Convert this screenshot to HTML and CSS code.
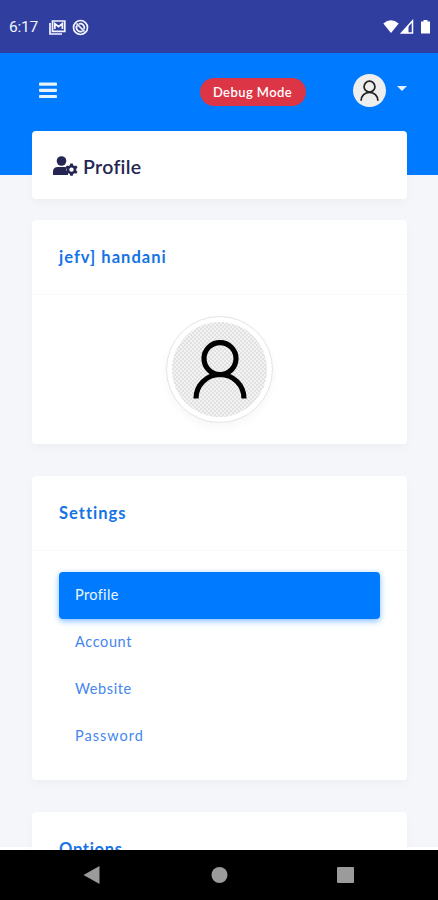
FILE: index.html
```html
<!DOCTYPE html>
<html lang="en">
<head>
<meta charset="utf-8">
<title>Profile</title>
<link rel="stylesheet" href="styles.css">
</head>
<body>
<div class="screen">
  <header class="status">
    <span class="time">6:17</span>
    <svg class="mail" width="17" height="15" viewBox="0 0 17 15"><path d="M1 3v11h12" fill="none" stroke="currentColor" stroke-width="1.7"/><path d="M3.5 1h12.300v10.300H3.500z" fill="none" stroke="currentColor" stroke-width="1.700"/><path d="M5.800 9V3.700l3.800 3 3.800-3V9" fill="none" stroke="currentColor" stroke-width="1.800"/></svg>
    <svg class="sync" width="17" height="17" viewBox="0 0 17 17" fill="none" stroke="currentColor"><circle cx="8.500" cy="8.500" r="7" stroke-width="1.700"/><path d="M5 6.500a4 4 0 0 0 5.500 5.500M6.800 5a4 4 0 0 1 5.200 5.200M4.500 4.500l8 8" stroke-width="1.700"/></svg>
    <svg class="signals" width="48" height="16" viewBox="0 0 48 16"><path d="M.3 4.500Q8-2 15.700 4.500L8 14z" fill="currentColor"/><path d="M29.500 2v12H18.500z" fill="none" stroke="currentColor" stroke-width="1.500"/><path d="M25.500 6v8h-7z" fill="currentColor"/><path d="M40.500 1h4v1.500H47V14.500h-9V2.500h2.500z" fill="currentColor"/></svg>
  </header>
  <main class="page">
    <nav class="topbar">
      <svg class="bars" width="18" height="17" viewBox="0 0 18 17" fill="currentColor"><rect y=".5" width="18" height="3.200" rx=".8"/><rect y="6.700" width="18" height="3.200" rx=".8"/><rect y="12.900" width="18" height="3.200" rx=".8"/></svg>
      <span class="badge"><span>Debug Mode</span></span>
      <span class="avatar"><svg width="19" height="21" viewBox="0 0 54 60"><circle cx="27" cy="19" r="15.500"/><path d="M3 59a24 24 0 0 1 48 0"/></svg></span>
      <i class="caret"></i>
    </nav>
    <section class="card title-card">
      <svg width="25" height="20" viewBox="0 0 25 20" fill="currentColor"><circle cx="8.500" cy="5" r="4.800"/><path d="M0 19v-3.500Q0 11 5 11h7q1 0 1.800.4-1 3.600 1.200 5.600v2z"/><path fill-rule="evenodd" d="M17.300 7.500h2.400l.5 1.800 1.300.7 1.700-.5 1.300 2.100-1.300 1.300v1.500l1.300 1.300-1.300 2.100-1.700-.5-1.300.7-.5 1.700h-2.400l-.5-1.700-1.300-.7-1.700.5-1.200-2.100 1.300-1.300v-1.500l-1.300-1.300 1.200-2.100 1.700.5 1.300-.7zM18.500 11.400a2.200 2.200 0 1 0 0 4.400 2.200 2.200 0 0 0 0-4.400z"/></svg>
      <h1>Profile</h1>
    </section>
    <section class="card user-card">
      <h2 class="name">jefv] handani</h2>
      <div class="photo-wrap"><div class="photo"><svg width="54" height="60" viewBox="0 0 54 60"><circle cx="27" cy="18.600" r="16"/><path d="M3 58.500a24 24 0 0 1 48 0"/></svg></div></div>
    </section>
    <section class="card settings-card">
      <h2 class="settings">Settings</h2>
      <ul class="menu">
        <li class="active m1">Profile</li>
        <li class="m2">Account</li>
        <li class="m3">Website</li>
        <li class="m4">Password</li>
      </ul>
    </section>
    <section class="card options-card"><h2 class="options">Options</h2></section>
  </main>
  <footer class="navbar">
    <svg width="438" height="50" viewBox="0 0 438 50" fill="#9b9b9b"><path d="M83.500 25 99.500 16v18z"/><circle cx="219.500" cy="25" r="8"/><rect x="337" y="17" width="17" height="16" rx="1"/></svg>
  </footer>
</div>
</body>
</html>
```
FILE: styles.css
```css
* { box-sizing: border-box; }
body { margin: 0; font-family: Lato, "Open Sans", sans-serif; }
.screen { width: 438px; height: 900px; display: flex; flex-direction: column; overflow: hidden; }
.status { flex: none; height: 53px; display: flex; align-items: center; padding: 1px 7px 0 9px; background: #303f9f; color: #f3f4ff; }
.time { width: 30px; font: 15.5px Roboto, sans-serif; letter-spacing: -.2px; white-space: nowrap; }
.mail { margin-left: 10px; }
.sync { margin-left: 6px; }
.signals { margin-left: auto; color: #fff; }
.page { flex: none; height: 797px; overflow: hidden; padding: 0 31px 0 32px; background: linear-gradient(#007bff 122px, #f4f6f9 122px, #f4f6f9 794px, #fff 794px); }
.topbar { height: 78px; display: flex; align-items: center; padding: 0 0 3px 6.500px; color: #e4f1ff; }
.bars { flex: none; }
.badge { width: 106px; height: 28px; margin-left: 143px; margin-top: 2px; border-radius: 14px; background: #dc3545; color: #fff; display: flex; align-items: center; justify-content: center; font-size: 13px; font-weight: 600; letter-spacing: .42px; white-space: nowrap; }
.avatar { width: 33px; height: 33px; margin-left: 47px; border-radius: 50%; background: #eee; display: flex; align-items: center; justify-content: center; }
.avatar svg { fill: none; stroke: #222; stroke-width: 5; }
.caret { margin-left: 11px; margin-top: -5px; border: 5px solid transparent; border-top-color: #e4f1ff; border-bottom: 0; }
.card { background: #fff; border-radius: 4px; box-shadow: 0 4px 8px rgba(0,0,0,.03); }
h1, h2 { margin: 0; white-space: nowrap; }
.title-card { height: 68px; display: flex; align-items: center; padding: 2px 21px 0; color: #252653; }
h1 { margin-left: 5px; font-size: 19.5px; font-weight: 600; letter-spacing: .3px; }
.user-card { height: 224px; margin-top: 21px; }
h2 { height: 75px; padding: 0 27px; border-bottom: 1px solid #f9f9f9; line-height: 74px; font-size: 16.5px; font-weight: 700; color: #1473e6; }
.photo-wrap { display: flex; justify-content: center; padding-top: 21px; }
.photo { width: 107px; height: 107px; border-radius: 50%; border: 1px solid #e2e5e8; padding: 5px; display: flex; align-items: center; justify-content: center; background: conic-gradient(#e1e1e1 25%, #f2f2f2 0 50%, #e1e1e1 0 75%, #f2f2f2 0) content-box 0 0 / 4px 4px, #fff; background-clip: content-box, border-box; box-shadow: 0 4px 8px rgba(0,0,0,.035); }
.photo svg { flex: none; fill: none; stroke: #000; stroke-width: 5.200; }
.settings-card { height: 304px; margin-top: 32px; }
.menu { list-style: none; margin: 0; padding: 21px 27px; }
.menu li { height: 47px; padding-left: 16px; line-height: 46px; font-size: 14.500px; color: #4386ef; border-radius: 4px; }
.menu .active { background: #007bff; color: #eef6ff; box-shadow: 0 2px 6px #7dbcff; }
.menu .m1 { letter-spacing: .35px; }
.menu .m2 { letter-spacing: .62px; }
.menu .m3 { letter-spacing: .62px; }
.menu .m4 { letter-spacing: 1px; }
.options-card { height: 80px; margin-top: 32px; }
.navbar { height: 50px; background: #000; }
.navbar svg { display: block; }
.name { letter-spacing: 1.020px; }
.settings { letter-spacing: 1px; }
.options { letter-spacing: .7px; }
```
